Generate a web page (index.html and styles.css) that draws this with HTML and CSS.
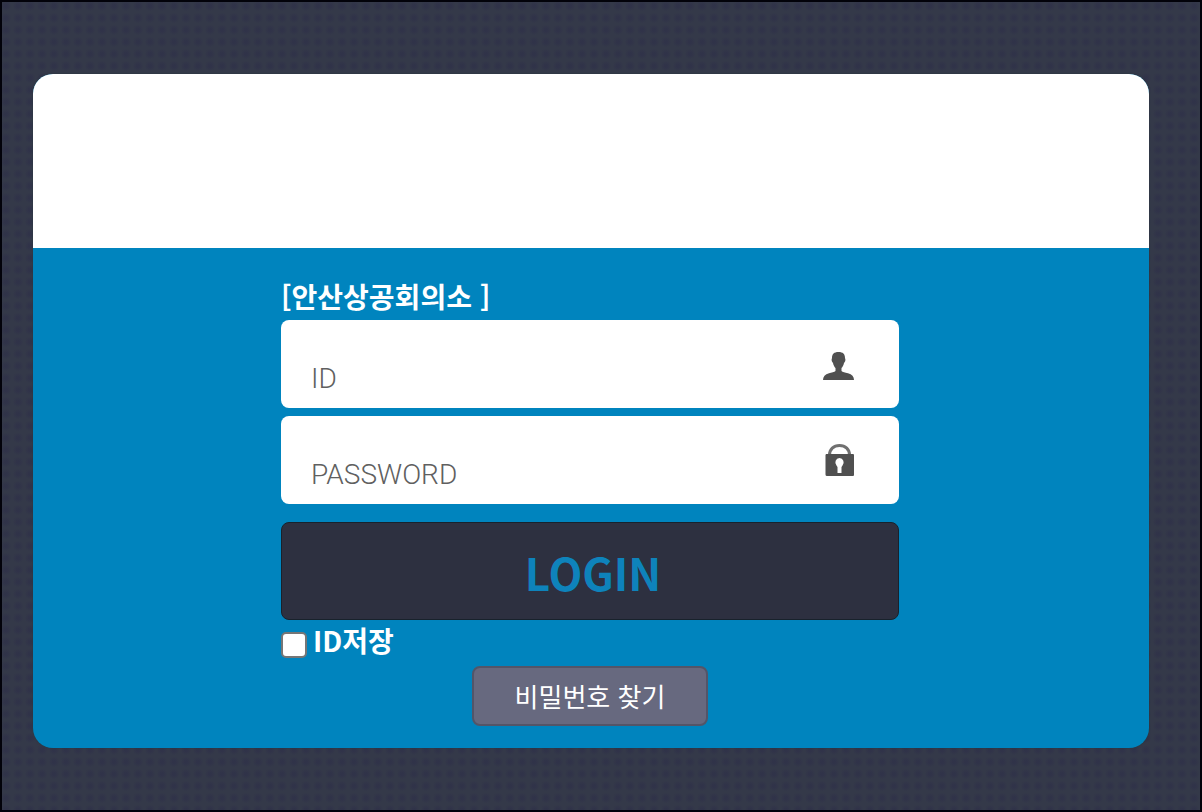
FILE: index.html
```html
<!DOCTYPE html>
<html lang="ko">
<head>
<meta charset="utf-8">
<meta name="viewport" content="width=device-width, initial-scale=1">
<title>안산상공회의소 로그인</title>
<link rel="stylesheet" href="styles.css">
</head>
<body>
<main class="card">
  <div class="card-head"></div>
  <div class="card-body">
    <form class="login">
      <h1 class="title">[안산상공회의소 ]</h1>
      <label class="field">
        <input class="field-input" type="text" placeholder="ID" aria-label="ID">
        <svg class="field-icon" viewBox="0 0 32 34" aria-hidden="true"><path d="M15.500 5c-4.500 0-6.500 2-6.500 6-1 2 0 4 1 5 .5 2.500 1.500 4 2.500 5v3c-1 1-4 1.500-6.500 2.200-4 1-6 3.300-6 6.800h31c0-3.500-2-5.800-6-6.800-3-.7-5.500-1.200-6.500-2.200V21c1-1 2-2.500 2.500-5 1-1 2-3 1-5 0-4-2-6-6.500-6z"/></svg>
      </label>
      <label class="field">
        <input class="field-input" type="password" placeholder="PASSWORD" aria-label="PASSWORD">
        <svg class="field-icon" viewBox="0 0 32 34" aria-hidden="true"><path class="shackle" d="M6.500 13v-1c0-5.500 4-9.500 10-9.500s10 4 10 9.500v1"/><path fill-rule="evenodd" d="M3 11h27q1 0 1 1v20q0 1-1 1H4q-1.500 0-1.500-1.500V12zM16.500 15a4.500 4.500 0 0 0-3 7.500l1 1.500v6h4v-6l1-1.500a4.500 4.500 0 0 0-3-7.500z"/></svg>
      </label>
      <button class="login-button" type="submit">LOGIN</button>
      <div class="save">
        <input class="save-box" type="checkbox" id="save-id">
        <label class="save-label" for="save-id">ID저장</label>
      </div>
      <button class="find-button" type="button">비밀번호 찾기</button>
    </form>
  </div>
</main>
</body>
</html>
```
FILE: styles.css
```css
* { box-sizing: border-box; }

body {
  min-height: 100vh;
  margin: 0;
  padding: 72px 51px 62px 31px;
  border: 2px solid #02020a;
  background-color: #343949;
  background-image: radial-gradient(ellipse at center, #303349 0 15%, transparent 65%);
  background-size: 12px 12px;
  font-family: "Noto Sans CJK KR", "Noto Sans", sans-serif;
}

.card {
  overflow: hidden;
  border-radius: 20px;
  background: #0084be;
  box-shadow: 0 0 2px #26383f;
}

.card-head {
  height: 174px;
  background: #fff;
}

.card-body { padding: 32px 26px 22px 24px; }

.login {
  display: flex;
  flex-direction: column;
  max-width: 618px;
  margin: 0 auto;
}

.title {
  margin: 0;
  color: #fff;
  font-size: 28px;
  font-weight: 700;
  line-height: 32px;
  height: 40px;
}

.field {
  display: flex;
  align-items: center;
  height: 88px;
  margin-bottom: 8px;
  padding: 0 44px 0 30px;
  border-radius: 8px;
  background: #fff;
}

.field-input {
  flex: 1;
  min-width: 0;
  height: 88px;
  padding: 28px 0 0;
  border: 0;
  outline: 0;
  background: transparent;
  color: #444;
  font-family: Roboto, sans-serif;
  font-size: 28px;
  font-weight: 300;
}

.field-input::placeholder { color: #606060; opacity: 1; }

.field-icon {
  width: 32px;
  height: 34px;
  fill: #505050;
}

.shackle {
  fill: none;
  stroke: #707070;
  stroke-width: 3;
}

.login-button {
  height: 98px;
  margin-top: 10px;
  padding: 2px 0 0 6px;
  border: 1px solid #18222c;
  border-radius: 8px;
  background: #2d3040;
  color: #0e83bb;
  font-family: "Noto Sans CJK KR", sans-serif;
  font-size: 44px;
  font-weight: 700;
  line-height: 60px;
}

.save {
  display: flex;
  align-items: flex-start;
  gap: 6px;
  height: 46px;
}

.save-box {
  appearance: none;
  width: 26px;
  height: 26px;
  margin: 12px 0 0;
  border: 2px solid #767676;
  border-radius: 5px;
  background: #fff;
}

.save-box:checked { box-shadow: inset 0 0 0 5px #fff; background: #0084be; }

.save-label {
  color: #fff;
  font-size: 28px;
  font-weight: 700;
  line-height: 40px;
}

.find-button {
  align-self: center;
  width: 236px;
  height: 60px;
  border: 2px solid #535568;
  border-radius: 8px;
  background: #67697f;
  color: #fff;
  font-family: "Noto Sans CJK KR", sans-serif;
  font-size: 26px;
  font-weight: 400;
  line-height: 52px;
}
```
